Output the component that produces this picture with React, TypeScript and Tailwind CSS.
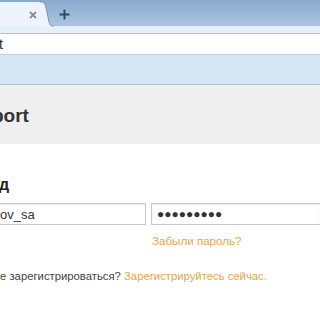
export default function App() {
  return (
    <div className="w-[320px] h-[320px] overflow-hidden bg-white font-['Liberation_Sans',Arial,sans-serif]">
      {/* tab strip */}
      <div className="flex h-[27px] bg-gradient-to-b from-[#8aa9cd] to-[#abc5e1] border-b border-[#8197b1]">
        <div className="flex items-center justify-end w-[40px] mt-[2px] bg-[#eef4fb] pr-[3px]">
          <svg width="8" height="8" viewBox="0 0 8 8" className="mt-[1px]">
            <path d="M1 1L7 7M7 1L1 7" stroke="#8c8c8c" strokeWidth="1.8" />
          </svg>
        </div>
        <svg width="14" height="27" viewBox="0 0 14 27" className="-mb-px">
          <path d="M0 2 C4 2 5 3 6 8 L9 22 C10 26 11 26 14 26 L14 27 L0 27 Z" fill="#eef4fb" />
          <path d="M0 2 C4 2 5 3 6 8 L9 22 C10 26 11 26 14 26" fill="none" stroke="#7e94ae" strokeWidth="1" />
        </svg>
        <div className="flex items-center ml-[5px]">
          <svg width="11" height="11" viewBox="0 0 11 11" className="mt-[2px]">
            <path d="M5.5 0.5V10.5M0.5 5.5H10.5" stroke="#34465c" strokeWidth="2" />
          </svg>
        </div>
      </div>
      <div className="h-[8px] bg-[#e7eff9] border-b border-[#b4bfcb] -mt-px" />
      {/* address bar */}
      <div className="h-[21px] bg-white border-b border-[#c3cdd8] flex items-center text-[14px] text-[#222]">
        <span className="-ml-[1px]">t</span>
      </div>
      <div className="h-[30px] bg-[#d8e7f6] border-b border-[#b6c3d0]" />
      {/* page header */}
      <div className="h-[59px] bg-[#efefef] flex items-center">
        <h1 className="text-[19px] font-bold text-[#333] mt-[3px] -ml-[8px]">port</h1>
      </div>
      {/* login form */}
      <div className="pt-[31px]">
        <h2 className="text-[16px] font-bold text-[#222] leading-[20px] -ml-[1px]">д</h2>
        <div className="flex gap-[5px] mt-[8px]">
          <div className="w-[146px] h-[22px] border border-l-0 border-[#c9c9c9] shadow-[inset_0_1px_2px_rgba(0,0,0,0.08)] flex items-center text-[13px] text-[#333]">
            <span className="mt-[1px]">ov_sa</span>
          </div>
          <div className="flex-1 h-[22px] border border-r-0 border-[#c9c9c9] shadow-[inset_0_1px_2px_rgba(0,0,0,0.08)] flex items-center pl-[5px] text-[12px] text-[#333] tracking-[0px]">
            ●●●●●●●●●
          </div>
        </div>
        <div className="ml-[152px] mt-[7px] text-[11.6px] text-[#e3a64c]">Забыли пароль?</div>
        <div className="mt-[19px] text-[11.3px] text-[#444]">
          е зарегистрироваться? <span className="text-[#e3a64c]">Зарегистрируйтесь сейчас.</span>
        </div>
      </div>
    </div>
  );
}
